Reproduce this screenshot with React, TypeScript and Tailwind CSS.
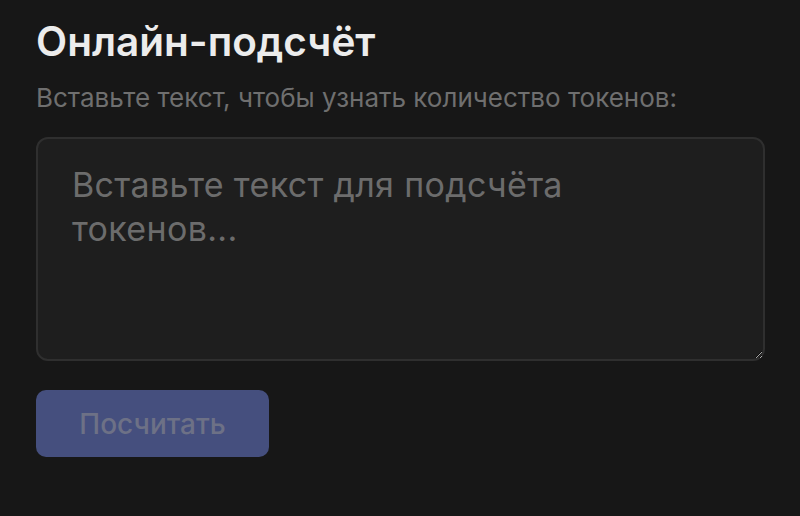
export default function App() {
  return (
    <div
      className="min-h-[516px] w-full bg-[#171717] px-9 pt-[18px]"
      style={{ fontFamily: "Inter, 'Noto Sans', sans-serif" }}
    >
      <h1 className="text-[40.5px] font-semibold leading-[48px] text-[#ececec]">Онлайн-подсчёт</h1>
      <p className="mt-[16px] text-[26px] leading-[32px] text-[#6f6f6f]">
        Вставьте текст, чтобы узнать количество токенов:
      </p>
      <textarea
        className="mt-[23px] block h-[224px] w-[729px] resize-y rounded-[12px] border-2 border-[#2f2f2f] bg-[#1e1e1e] pb-[20px] pl-[34px] pr-[110px] pt-[24px] text-[34px] leading-[44px] tracking-[0.01em] text-[#d0d0d0] outline-none placeholder:text-[#6c6c6c]"
        placeholder="Вставьте текст для подсчёта токенов..."
      />
      <button
        type="button"
        className="mt-[29px] flex h-[67px] w-[233px] items-center justify-center rounded-[10px] bg-[#454f7e] text-[28px] font-medium text-[#6d7186]"
      >
        Посчитать
      </button>
    </div>
  );
}
